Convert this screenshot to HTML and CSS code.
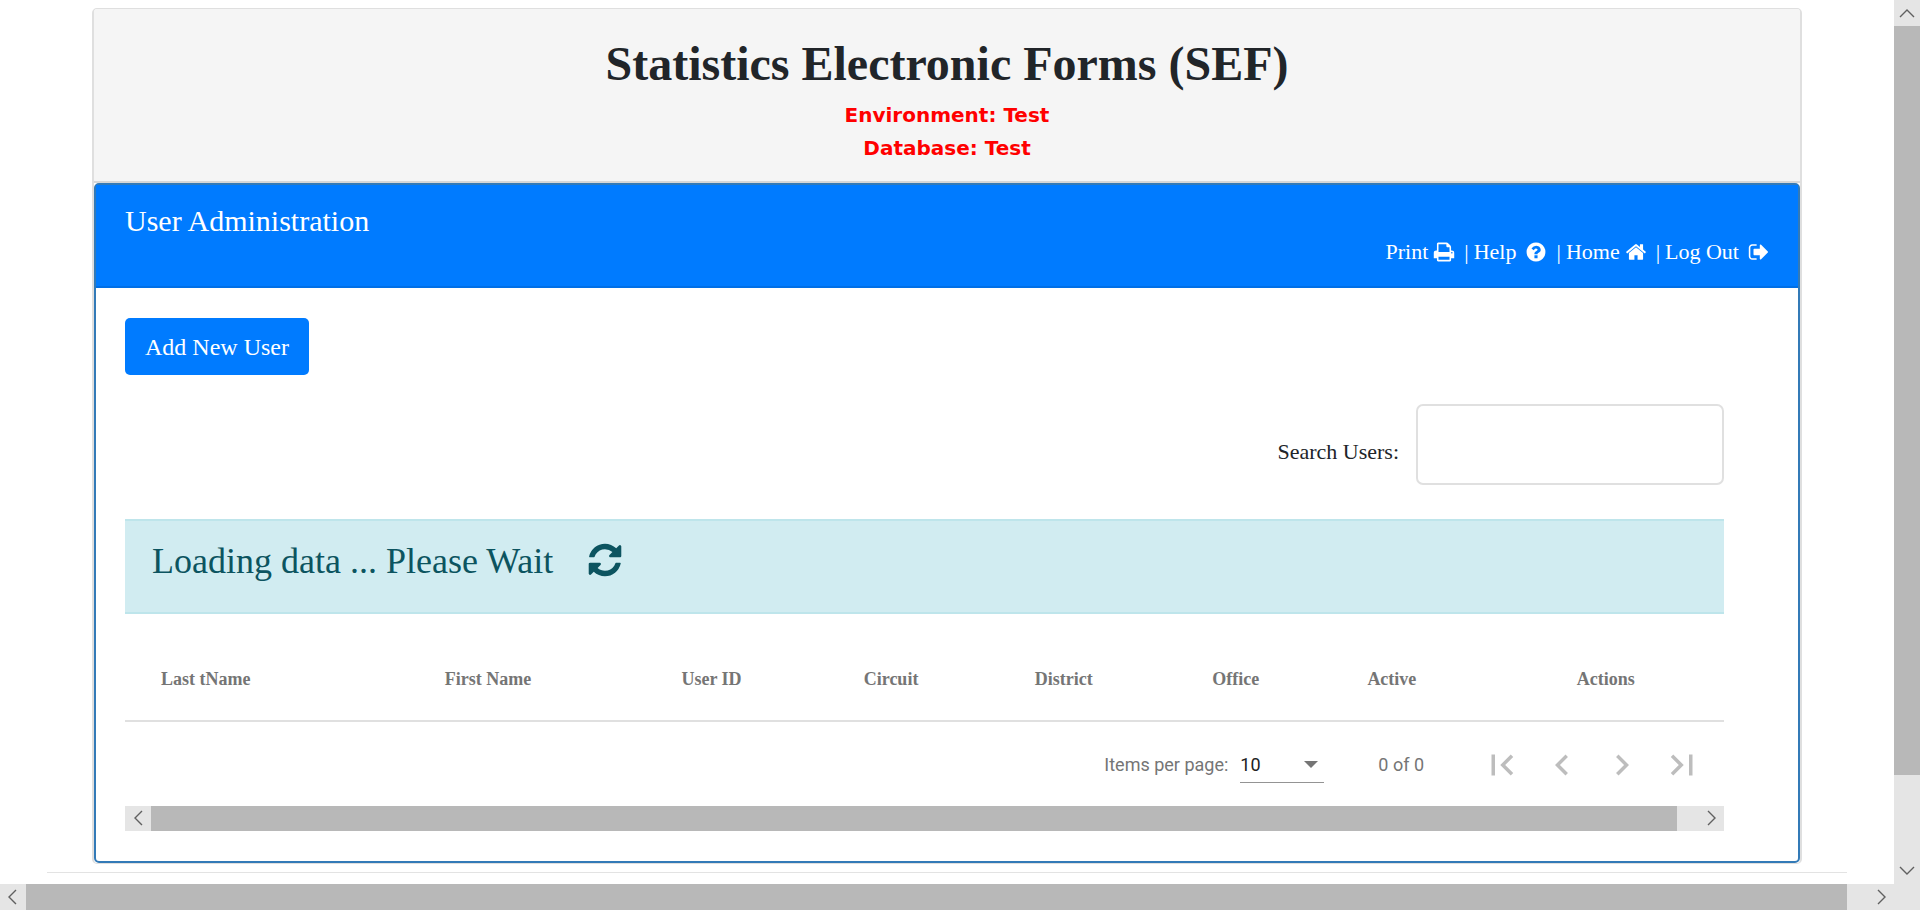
FILE: index.html
```html
<!DOCTYPE html>
<html lang="en">
<head>
<meta charset="utf-8">
<title>Statistics Electronic Forms (SEF)</title>
<link rel="stylesheet" href="styles.css">
</head>
<body>
<div class="viewport">
  <div class="page">
    <div class="card">
      <header class="banner">
        <h1 class="banner-title">Statistics Electronic Forms (SEF)</h1>
        <p class="banner-note">Environment: Test</p>
        <p class="banner-note">Database: Test</p>
      </header>
      <main class="panel">
        <div class="panel-head">
          <h2 class="panel-title">User Administration</h2>
          <nav class="panel-nav">
            <a class="nav-link" href="#">Print <svg class="icon" viewBox="0 0 1792 1792"><path d="M448 1536h896v-256h-896v256zm0-640h896v-384h-160q-40 0-68-28t-28-68v-160h-640v640zm1152 64q0-26-19-45t-45-19-45 19-19 45 19 45 45 19 45-19 19-45zm128 0v416q0 13-9.5 22.5t-22.5 9.500h-224v160q0 40-28 68t-68 28h-960q-40 0-68-28t-28-68v-160h-224q-13 0-22.500-9.500t-9.500-22.500v-416q0-79 56.500-135.500t135.500-56.500h64v-544q0-40 28-68t68-28h672q40 0 88 20t76 48l152 152q28 28 48 76t20 88v256h64q79 0 135.500 56.500t56.500 135.500z"/></svg></a>
            <span class="nav-item">|<a class="nav-link" href="#">Help <svg class="icon icon-spaced" viewBox="0 0 1792 1792"><path d="M1024 1376v-192q0-14-9-23t-23-9h-192q-14 0-23 9t-9 23v192q0 14 9 23t23 9h192q14 0 23-9t9-23zm256-672q0-88-55.5-163t-138.500-116-170-41q-243 0-371 213-15 24 8 42l132 100q7 6 19 6 16 0 25-12 53-68 86-92 34-24 86-24 48 0 85.500 26t37.500 59q0 38-20 61t-68 45q-63 28-115.500 86.500t-52.500 125.500v36q0 14 9 23t23 9h192q14 0 23-9t9-23q0-19 21.500-49.500t54.500-49.500q32-18 49-28.500t46-35 44.500-48 28-60.500 12.500-81zm384 192q0 209-103 385.500t-279.500 279.500-385.500 103-385.500-103-279.500-279.500-103-385.500 103-385.500 279.500-279.500 385.500-103 385.500 103 279.500 279.500 103 385.500z"/></svg></a></span>
            <span class="nav-item">|<a class="nav-link" href="#">Home <svg class="icon" viewBox="0 0 1792 1792"><path d="M1472 992v480q0 26-19 45t-45 19h-384v-384h-256v384h-384q-26 0-45-19t-19-45v-480q0-1 .5-3t.5-3l575-474 575 474q1 2 1 6zm223-69l-62 74q-8 9-21 11h-3q-13 0-21-7l-692-577-692 577q-12 8-24 7-13-2-21-11l-62-74q-8-10-7-23.500t11-21.500l719-599q32-26 76-26t76 26l244 204v-195q0-14 9-23t23-9h192q14 0 23 9t9 23v408l219 182q10 8 11 21.500t-7 23.500z"/></svg></a></span>
            <span class="nav-item">|<a class="nav-link" href="#">Log Out <svg class="icon icon-spaced" viewBox="0 0 1792 1792"><path d="M704 1440q0 4 1 20t.5 26.500-3 23.500-10 19.500-20.500 6.500h-320q-119 0-203.500-84.500t-84.500-203.500v-704q0-119 84.500-203.500t203.500-84.500h320q13 0 22.500 9.500t9.500 22.500q0 4 1 20t.5 26.500-3 23.500-10 19.500-20.500 6.500h-320q-66 0-113 47t-47 113v704q0 66 47 113t113 47h312l11.500 1 11.500 3 8 5.500 7 9 2 13.500zm928-544q0 26-19 45l-544 544q-19 19-45 19t-45-19-19-45v-288h-448q-26 0-45-19t-19-45v-384q0-26 19-45t45-19h448v-288q0-26 19-45t45-19 45 19l544 544q19 19 19 45z"/></svg></a></span>
          </nav>
        </div>
        <div class="panel-body">
          <button class="add-button" type="button">Add New User</button>
          <div class="list">
            <div class="search">
              <label class="search-label" for="search">Search Users:</label>
              <input class="search-input" id="search" type="text">
            </div>
            <div class="notice" role="status">
              <span>Loading data ... Please Wait</span>
              <svg class="notice-icon" viewBox="0 0 1792 1792"><path d="M1639 1056q0 5-1 7-64 268-268 434.500t-478 166.500q-146 0-282.500-55t-243.500-157l-129 129q-19 19-45 19t-45-19-19-45v-448q0-26 19-45t45-19h448q26 0 45 19t19 45-19 45l-137 137q71 66 161 102t187 36q134 0 250-65t186-179q11-17 53-117 8-23 30-23h192q13 0 22.500 9.500t9.500 22.500zm25-800v448q0 26-19 45t-45 19h-448q-26 0-45-19t-19-45 19-45l138-138q-148-137-349-137-134 0-250 65t-186 179q-11 17-53 117-8 23-30 23h-199q-13 0-22.500-9.500t-9.500-22.500v-7q65-268 270-434.500t480-166.500q146 0 284 55.500t245 156.500l130-129q19-19 45-19t45 19 19 45z"/></svg>
            </div>
            <table class="users">
              <colgroup><col class="c-last"><col class="c-first"><col class="c-id"><col class="c-circuit"><col class="c-district"><col class="c-office"><col class="c-active"><col class="c-actions"></colgroup>
              <thead>
                <tr><th>Last tName</th><th>First Name</th><th>User ID</th><th>Circuit</th><th>District</th><th>Office</th><th>Active</th><th>Actions</th></tr>
              </thead>
            </table>
            <div class="pager">
              <label for="size">Items per page:</label>
              <div class="size-box">
                <select class="size" id="size"><option>10</option></select>
                <svg class="size-arrow" viewBox="0 0 14 7"><path d="M0 0h14L7 7z"/></svg>
              </div>
              <span class="range">0 of 0</span>
              <div class="pager-buttons">
                <button class="page-button" type="button" aria-label="First page" disabled><svg viewBox="0 0 24 24"><path d="M18.410 16.590L13.820 12l4.590-4.590L17 6l-6 6 6 6zM6 6h2v12H6z"/></svg></button>
                <button class="page-button" type="button" aria-label="Previous page" disabled><svg viewBox="0 0 24 24"><path d="M15.410 7.410L14 6l-6 6 6 6 1.410-1.410L10.830 12z"/></svg></button>
                <button class="page-button" type="button" aria-label="Next page" disabled><svg viewBox="0 0 24 24"><path d="M10 6L8.590 7.410 13.170 12l-4.580 4.590L10 18l6-6z"/></svg></button>
                <button class="page-button" type="button" aria-label="Last page" disabled><svg viewBox="0 0 24 24"><path d="M5.590 7.410L10.180 12l-4.590 4.590L7 18l6-6-6-6zM16 6h2v12h-2z"/></svg></button>
              </div>
            </div>
            <div class="bar bar-list">
              <span class="bar-end"><svg viewBox="0 0 26 26"><path d="M17 5L10 12l7 7"/></svg></span>
              <div class="track"><div class="thumb"></div></div>
              <span class="bar-end"><svg viewBox="0 0 26 26"><path d="M10 5l7 7-7 7"/></svg></span>
            </div>
          </div>
        </div>
      </main>
    </div>
    <hr class="rule">
  </div>
  <div class="bar bar-vertical">
    <span class="bar-end"><svg viewBox="0 0 26 26"><path d="M6 17l7-7 7 7"/></svg></span>
    <div class="track"><div class="thumb thumb-vertical"></div></div>
    <span class="bar-end"><svg viewBox="0 0 26 26"><path d="M6 9l7 7 7-7"/></svg></span>
  </div>
  <div class="bar">
    <span class="bar-end"><svg viewBox="0 0 26 26"><path d="M16 6l-7 7 7 7"/></svg></span>
    <div class="track"><div class="thumb"></div></div>
    <span class="bar-end"><svg viewBox="0 0 26 26"><path d="M10 6l7 7-7 7"/></svg></span>
  </div>
  <div class="corner"></div>
</div>
</body>
</html>
```
FILE: styles.css
```css
* { box-sizing: border-box; }

body {
  margin: 0;
  background: #fff;
  color: #212529;
  font-family: "Liberation Serif", "Times New Roman", serif;
  font-size: 22px;
  line-height: 32px;
}

h1, h2, p { margin: 0; }
svg { display: block; }

.viewport {
  display: grid;
  grid-template-columns: minmax(0, 1fr) 26px;
  grid-template-rows: 1fr 26px;
  min-height: 100vh;
}

.page { padding: 8px 47px 0; }

.card {
  margin: 0 45px;
  border: 2px solid #dfdfdf;
  border-top-width: 1px;
  border-bottom-width: 1px;
  border-radius: 5px;
}

.banner {
  padding: 25px 24px 16px;
  border-bottom: 2px solid #d7d7d7;
  border-radius: 3px 3px 0 0;
  background: #f5f5f5;
  text-align: center;
}

.banner-title {
  font-size: 48px;
  line-height: 60px;
  margin-bottom: 5px;
}

.banner-note {
  color: #f00;
  font-family: "DejaVu Sans", Verdana, sans-serif;
  font-size: 20px;
  font-weight: bold;
  line-height: 33px;
}

.panel {
  border: 2px solid #337ab7;
  border-radius: 5px;
}

.panel-head {
  display: flex;
  flex-direction: column;
  padding: 18px 28px 22px 29px;
  border-bottom: 2px solid #006fe6;
  background: #007bff;
  color: #fff;
}

.panel-title {
  font-size: 30px;
  font-weight: normal;
  line-height: 36px;
}

.panel-nav {
  display: flex;
  justify-content: flex-end;
  gap: 9px;
  line-height: 25px;
}

.nav-item { display: flex; gap: 5px; }

.nav-link {
  display: flex;
  align-items: center;
  gap: 5px;
  color: #fff;
  text-decoration: none;
}

.icon { width: 22px; height: 22px; fill: currentColor; }
.icon-spaced { margin-left: 4px; }

.panel-body { padding: 30px 29px; }

.add-button {
  display: block;
  height: 57px;
  padding: 0 20px;
  border: 0;
  border-radius: 5px;
  background: #007bff;
  color: #fff;
  font: inherit;
  font-size: 24px;
}

.list { margin: 29px 45px 0 0; }

.search {
  display: flex;
  justify-content: flex-end;
  align-items: center;
  gap: 17px;
}

.search-label { padding-top: 14px; }

.search-input {
  width: 308px;
  height: 81px;
  border: 2px solid #e0e0e0;
  border-radius: 7px;
  padding: 0 16px;
  font: inherit;
}

.notice {
  display: flex;
  align-items: flex-start;
  gap: 33px;
  margin-top: 34px;
  padding: 20px 27px 31px;
  border: solid #bee5eb;
  border-width: 2px 0;
  background: #d1ecf1;
  color: #0c5460;
  font-size: 36px;
  line-height: 40px;
}

.notice-icon { width: 38px; height: 38px; fill: currentColor; }

.users {
  width: 100%;
  margin-top: 37px;
  border-collapse: collapse;
  table-layout: fixed;
}

.users th {
  height: 70px;
  padding: 0 0 14px;
  border-bottom: 2px solid #e0e0e0;
  color: #757575;
  font-size: 18px;
  text-align: left;
}

.users th:first-child { padding-left: 36px; }

.c-last { width: 20%; }
.c-first { width: 14.8%; }
.c-id { width: 11.4%; }
.c-circuit { width: 10.7%; }
.c-district { width: 11.1%; }
.c-office { width: 9.7%; }
.c-active { width: 13.1%; }

.pager {
  display: flex;
  justify-content: flex-end;
  align-items: center;
  height: 84px;
  padding: 2px 12px 0 0;
  color: #757575;
  font-family: Roboto, sans-serif;
  font-size: 18px;
}

.size-box {
  display: grid;
  align-items: center;
  margin-left: 12px;
  border-bottom: 1px solid #949494;
}

.size, .size-arrow { grid-area: 1 / 1; }

.size {
  width: 84px;
  height: 34px;
  border: 0;
  appearance: none;
  background: transparent;
  color: #212121;
  font: inherit;
}

.size-arrow { justify-self: end; width: 14px; margin-right: 6px; fill: #757575; }
.range { margin: 0 48px 0 54px; }
.pager-buttons { display: flex; }

.page-button {
  width: 60px;
  height: 60px;
  padding: 9px;
  border: 0;
  background: transparent;
}

.page-button svg { width: 42px; height: 42px; fill: #bdbdbd; }

.bar {
  display: flex;
  background: #e5e5e5;
}

.bar-list { height: 25px; }
.bar-vertical { flex-direction: column; }
.bar-end { width: 26px; flex: none; }
.bar-end svg { fill: none; stroke: #606060; stroke-width: 1.4; }
.track { flex: 1; display: flex; }
.thumb { width: calc(100% - 21px); background: #b8b8b8; }
.thumb-vertical { width: 100%; height: 90%; }

.rule {
  margin: 8px 0 11px;
  border: 0;
  border-top: 1px solid #e3e3e3;
}

.corner { background: #e5e5e5; }
```
